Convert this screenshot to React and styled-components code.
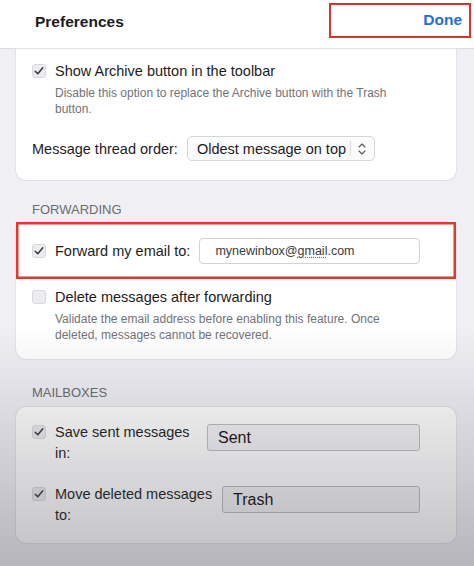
import React from 'react'
import styled, { createGlobalStyle } from 'styled-components'

const GlobalStyle = createGlobalStyle`
    body {
        margin: 0;
        background: #efeff4;
        font-family: "Liberation Sans", Arial, sans-serif;
        color: #1c1c1e;
        -webkit-font-smoothing: antialiased;
    }
`

// Page frame, with the dim fade at the bottom drawn over everything

const Page = styled.div`
    position: relative;
    width: 474px;
    height: 566px;
    overflow: hidden;
    background: #efeff4;
    &::after {
        content: '';
        position: absolute;
        left: 0;
        right: 0;
        bottom: 0;
        height: 240px;
        background: linear-gradient(to bottom, rgba(60, 60, 70, 0), rgba(60, 60, 70, 0.32));
        pointer-events: none;
    }
`

// Top bar

const Header = styled.div`
    height: 48px;
    background: #fff;
    border-bottom: 1px solid #dcdce0;
    display: flex;
    align-items: center;
    justify-content: space-between;
    padding-left: 35px;
`

const Title = styled.div`
    font-size: 15.5px;
    font-weight: 700;
    margin-top: -4px;
`

const DoneButton = styled.div`
    width: 142px;
    height: 35px;
    box-sizing: border-box;
    border: 2.5px solid #d8342b;
    margin: -8px 3px 0 0;
    display: flex;
    align-items: center;
    justify-content: flex-end;
    padding-right: 7px;
    color: #1f6fd8;
    font-size: 15.5px;
    font-weight: 700;
`

// Scrolling body

const Content = styled.div`
    padding: 0 18px 0 16px;
`

const Card = styled.div`
    background: #fff;
    box-shadow: 0 0 0 1px #e2e2e7;
    border-radius: ${p => (p.$cut ? '0 0 10px 10px' : '10px')};
    padding: ${p => p.$pad};
`

const SectionLabel = styled.div`
    font-size: 13px;
    color: #6b6b70;
    text-transform: uppercase;
    padding: ${p => p.$pad || '22px 0 4px 16px'};
    line-height: 16px;
`

const CheckRow = styled.div`
    display: flex;
    align-items: flex-start;
    gap: 9px;
`

const RowText = styled.div`
    display: flex;
    flex-direction: column;
    gap: 5px;
`

const Label = styled.div`
    font-size: 14.5px;
    line-height: 18px;
    color: #1c1c1e;
    white-space: nowrap;
`

const Hint = styled.div`
    font-size: 12px;
    line-height: 16px;
    color: #727277;
`

const Box = styled.div`
    flex: none;
    width: 14px;
    height: 14px;
    margin-top: 2px;
    border-radius: 3px;
    box-sizing: border-box;
    background: #ececef;
    border: 1px solid #dadade;
    display: flex;
    align-items: center;
    justify-content: center;
`

const Checkbox = ({ checked }) => (
    <Box>
        {checked && (
            <svg width="12" height="12" viewBox="0 0 12 12">
                <path d="M2.2 6.3 L4.8 8.8 L9.8 2.8" fill="none" stroke="#3a3a3c" strokeWidth="1.5" strokeLinecap="round" strokeLinejoin="round" />
            </svg>
        )}
    </Box>
)

const OrderRow = styled.div`
    display: flex;
    align-items: center;
    gap: 9px;
    margin-top: 19px;
`

const Select = styled.div`
    width: 188px;
    height: 25px;
    box-sizing: border-box;
    border: 1px solid #d6d6da;
    border-radius: 5px;
    background: #fbfbfc;
    display: flex;
    align-items: center;
    padding-left: 9px;
    font-size: 14.5px;
    white-space: nowrap;
`

const SelectText = styled.div`
    flex: 1;
`

const SelectDivider = styled.div`
    width: 1px;
    height: 15px;
    background: #dcdce0;
    margin-right: 5px;
`

const Stepper = () => (
    <svg width="12" height="16" viewBox="0 0 12 16" style={{ marginRight: 6 }}>
        <path d="M3 6 L6 3 L9 6 M3 10 L6 13 L9 10" fill="none" stroke="#55555a" strokeWidth="1.1" strokeLinecap="round" strokeLinejoin="round" />
    </svg>
)

// Forward row with the red highlight frame

const ForwardRow = styled.div`
    display: flex;
    align-items: center;
    gap: 9px;
    background: #fff;
    box-shadow: inset 0 0 0 2.5px #e0392d;
    padding: 16px 36px 15px 16px;
    & > ${Box} { margin-top: 0; }
`

const EmailInput = styled.div`
    flex: 1;
    height: 26px;
    box-sizing: border-box;
    border: 1px solid #d2d2d6;
    border-radius: 4px;
    display: flex;
    align-items: center;
    padding-left: 15px;
    font-size: 12.5px;
    color: #3a3a3c;
`

const Misspelt = styled.span`
    text-decoration: underline dotted #d23a3a;
    text-underline-offset: 2px;
`

const DeleteBlock = styled.div`
    padding: 9px 36px 16px 16px;
`

// Mailbox rows

const MailRow = styled.div`
    display: flex;
    align-items: flex-start;
    gap: 9px;
    & + & { margin-top: 21px; }
`

const MailLabel = styled.div`
    width: ${p => p.$w}px;
    font-size: 14.5px;
    line-height: 21px;
    margin-top: -1px;
`

const FolderField = styled.div`
    flex: 1;
    margin: 1px 0 0 -2px;
    height: 27px;
    box-sizing: border-box;
    border: 1px solid #bdbdc1;
    border-radius: 3px;
    background: #f3f3f4;
    display: flex;
    align-items: center;
    padding-left: 10px;
    font-size: 16px;
    color: #111;
`

export default function App() {
    return (
        <Page>
            <GlobalStyle />
            <Header>
                <Title>Preferences</Title>
                <DoneButton>Done</DoneButton>
            </Header>
            <Content>
                <Card $cut $pad="13px 36px 19px 16px">
                    <CheckRow>
                        <Checkbox checked />
                        <RowText>
                            <Label>Show Archive button in the toolbar</Label>
                            <Hint>Disable this option to replace the Archive button with the Trash button.</Hint>
                        </RowText>
                    </CheckRow>
                    <OrderRow>
                        <Label>Message thread order:</Label>
                        <Select>
                            <SelectText>Oldest message on top</SelectText>
                            <SelectDivider />
                            <Stepper />
                        </Select>
                    </OrderRow>
                </Card>

                <SectionLabel>Forwarding</SectionLabel>
                <Card $pad="0">
                    <ForwardRow>
                        <Checkbox checked />
                        <Label>Forward my email to:</Label>
                        <EmailInput>
                            <span>mynewinbox@<Misspelt>gmail</Misspelt>.com</span>
                        </EmailInput>
                    </ForwardRow>
                    <DeleteBlock>
                        <CheckRow>
                            <Checkbox />
                            <RowText>
                                <Label>Delete messages after forwarding</Label>
                                <Hint>Validate the email address before enabling this feature. Once deleted, messages cannot be recovered.</Hint>
                            </RowText>
                        </CheckRow>
                    </DeleteBlock>
                </Card>

                <SectionLabel $pad="26px 0 6px 16px">Mailboxes</SectionLabel>
                <Card $pad="16px 36px 17px 16px">
                    <MailRow>
                        <Checkbox checked />
                        <MailLabel $w={145}>Save sent messages in:</MailLabel>
                        <FolderField>Sent</FolderField>
                    </MailRow>
                    <MailRow>
                        <Checkbox checked />
                        <MailLabel $w={160}>Move deleted messages to:</MailLabel>
                        <FolderField>Trash</FolderField>
                    </MailRow>
                </Card>
            </Content>
        </Page>
    )
}
